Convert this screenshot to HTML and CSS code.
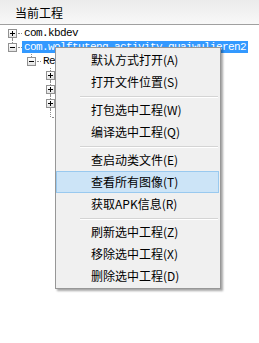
FILE: index.html
```html
<!DOCTYPE html>
<html lang="zh-CN">
<head>
<meta charset="utf-8">
<title>当前工程</title>
<link rel="stylesheet" href="styles.css">
</head>
<body>
<div class="panel">
  <div class="header">当前工程</div>
  <div class="tree">
    <div class="row">
      <span class="exp down"><span class="box plus"></span><span class="hl"></span></span>
      <span class="label">com.kbdev</span>
    </div>
    <div class="row">
      <span class="exp up"><span class="box"></span><span class="hl"></span></span>
      <span class="label sel">com.wolftuteng.activity.guaiwulieren2</span>
    </div>
    <div class="row">
      <span class="ind"></span>
      <span class="exp up"><span class="box"></span><span class="hl"></span></span>
      <span class="label clip">Re</span>
    </div>
    <div class="row">
      <span class="ind"></span><span class="ind"></span>
      <span class="exp up down"><span class="box plus"></span></span>
    </div>
    <div class="row">
      <span class="ind"></span><span class="ind"></span>
      <span class="exp up down"><span class="box plus"></span></span>
    </div>
    <div class="row">
      <span class="ind"></span><span class="ind"></span>
      <span class="exp up down"><span class="box plus"></span></span>
    </div>
    <div class="row">
      <span class="ind"></span><span class="ind"></span>
      <span class="exp leaf"></span>
    </div>
  </div>

  <div class="menu">
    <div class="item">默认方式打开(A)</div>
    <div class="item">打开文件位置(S)</div>
    <div class="sep"></div>
    <div class="item">打包选中工程(W)</div>
    <div class="item">编译选中工程(Q)</div>
    <div class="sep"></div>
    <div class="item">查启动类文件(E)</div>
    <div class="item hover">查看所有图像(T)</div>
    <div class="item">获取APK信息(R)</div>
    <div class="sep"></div>
    <div class="item">刷新选中工程(Z)</div>
    <div class="item">移除选中工程(X)</div>
    <div class="item">删除选中工程(D)</div>
  </div>
</div>
</body>
</html>
```

FILE: styles.css
```css
html, body {
  margin: 0;
  padding: 0;
  background: #ffffff;
}

body {
  width: 259px;
  height: 343px;
  overflow: hidden;
  font-family: "Noto Sans CJK SC", "Liberation Sans", sans-serif;
}

.panel {
  position: relative;
  width: 259px;
  height: 343px;
  background: #ffffff;
}

.header {
  box-sizing: border-box;
  height: 25px;
  padding: 1px 0 0 15px;
  border-bottom: 1px solid #a0a0a0;
  background: linear-gradient(#ebebeb, #f8f8f8);
  font-size: 12px;
  line-height: 23px;
  color: #000000;
}

.tree {
  padding: 1px 0 0 8px;
  font-family: "Liberation Mono", "DejaVu Sans Mono", monospace;
  font-size: 11px;
  letter-spacing: -0.6px;
  color: #000000;
}

.row {
  display: flex;
  align-items: center;
  height: 14px;
}

.ind {
  flex: none;
  width: 19px;
  height: 14px;
}

.exp {
  flex: none;
  position: relative;
  width: 14px;
  height: 14px;
}

.exp.up::before {
  content: "";
  position: absolute;
  left: 4px;
  top: 0;
  height: 3px;
  border-left: 1px dotted #8c8c8c;
}

.exp.down::after {
  content: "";
  position: absolute;
  left: 4px;
  top: 12px;
  height: 2px;
  border-left: 1px dotted #8c8c8c;
}

.exp.leaf::before {
  content: "";
  position: absolute;
  left: 4px;
  top: 0;
  height: 7px;
  border-left: 1px dotted #8c8c8c;
}

.exp.leaf::after {
  content: "";
  position: absolute;
  left: 6px;
  top: 7px;
  width: 8px;
  border-top: 1px dotted #8c8c8c;
}

.hl {
  position: absolute;
  left: 10px;
  top: 7px;
  width: 4px;
  border-top: 1px dotted #8c8c8c;
}

.box {
  position: absolute;
  left: 0;
  top: 3px;
  width: 7px;
  height: 7px;
  border: 1px solid #919191;
  background: linear-gradient(#ffffff, #e2e2e2);
}

.box::before {
  content: "";
  position: absolute;
  left: 1px;
  top: 3px;
  width: 5px;
  height: 1px;
  background: #000000;
}

.box.plus::after {
  content: "";
  position: absolute;
  left: 3px;
  top: 1px;
  width: 1px;
  height: 5px;
  background: #000000;
}

.label {
  padding: 0 2px;
  height: 12px;
  line-height: 12px;
  white-space: nowrap;
}

.label.clip {
  overflow: hidden;
}

.label.sel {
  background: #3399ff;
  color: #ffffff;
}

.menu {
  position: absolute;
  left: 55px;
  top: 47px;
  width: 164px;
  padding: 1px 0;
  border: 1px solid #979797;
  background: #f0f0f0;
  box-shadow: 2px 2px 2px rgba(0, 0, 0, 0.35);
  font-size: 12px;
  color: #000000;
}

.item {
  box-sizing: border-box;
  height: 22px;
  margin-right: 1px;
  padding-left: 35px;
  line-height: 22px;
  white-space: nowrap;
}

.item.hover {
  padding-left: 34px;
  line-height: 20px;
  border: 1px solid #99c9ef;
  background: #cce4f7;
}

.sep {
  height: 6px;
  margin: 0 2px 0 24px;
  background: linear-gradient(to bottom,
    transparent 3px, #d4d4d4 3px, #d4d4d4 4px,
    #ffffff 4px, #ffffff 5px, transparent 5px);
}
```
